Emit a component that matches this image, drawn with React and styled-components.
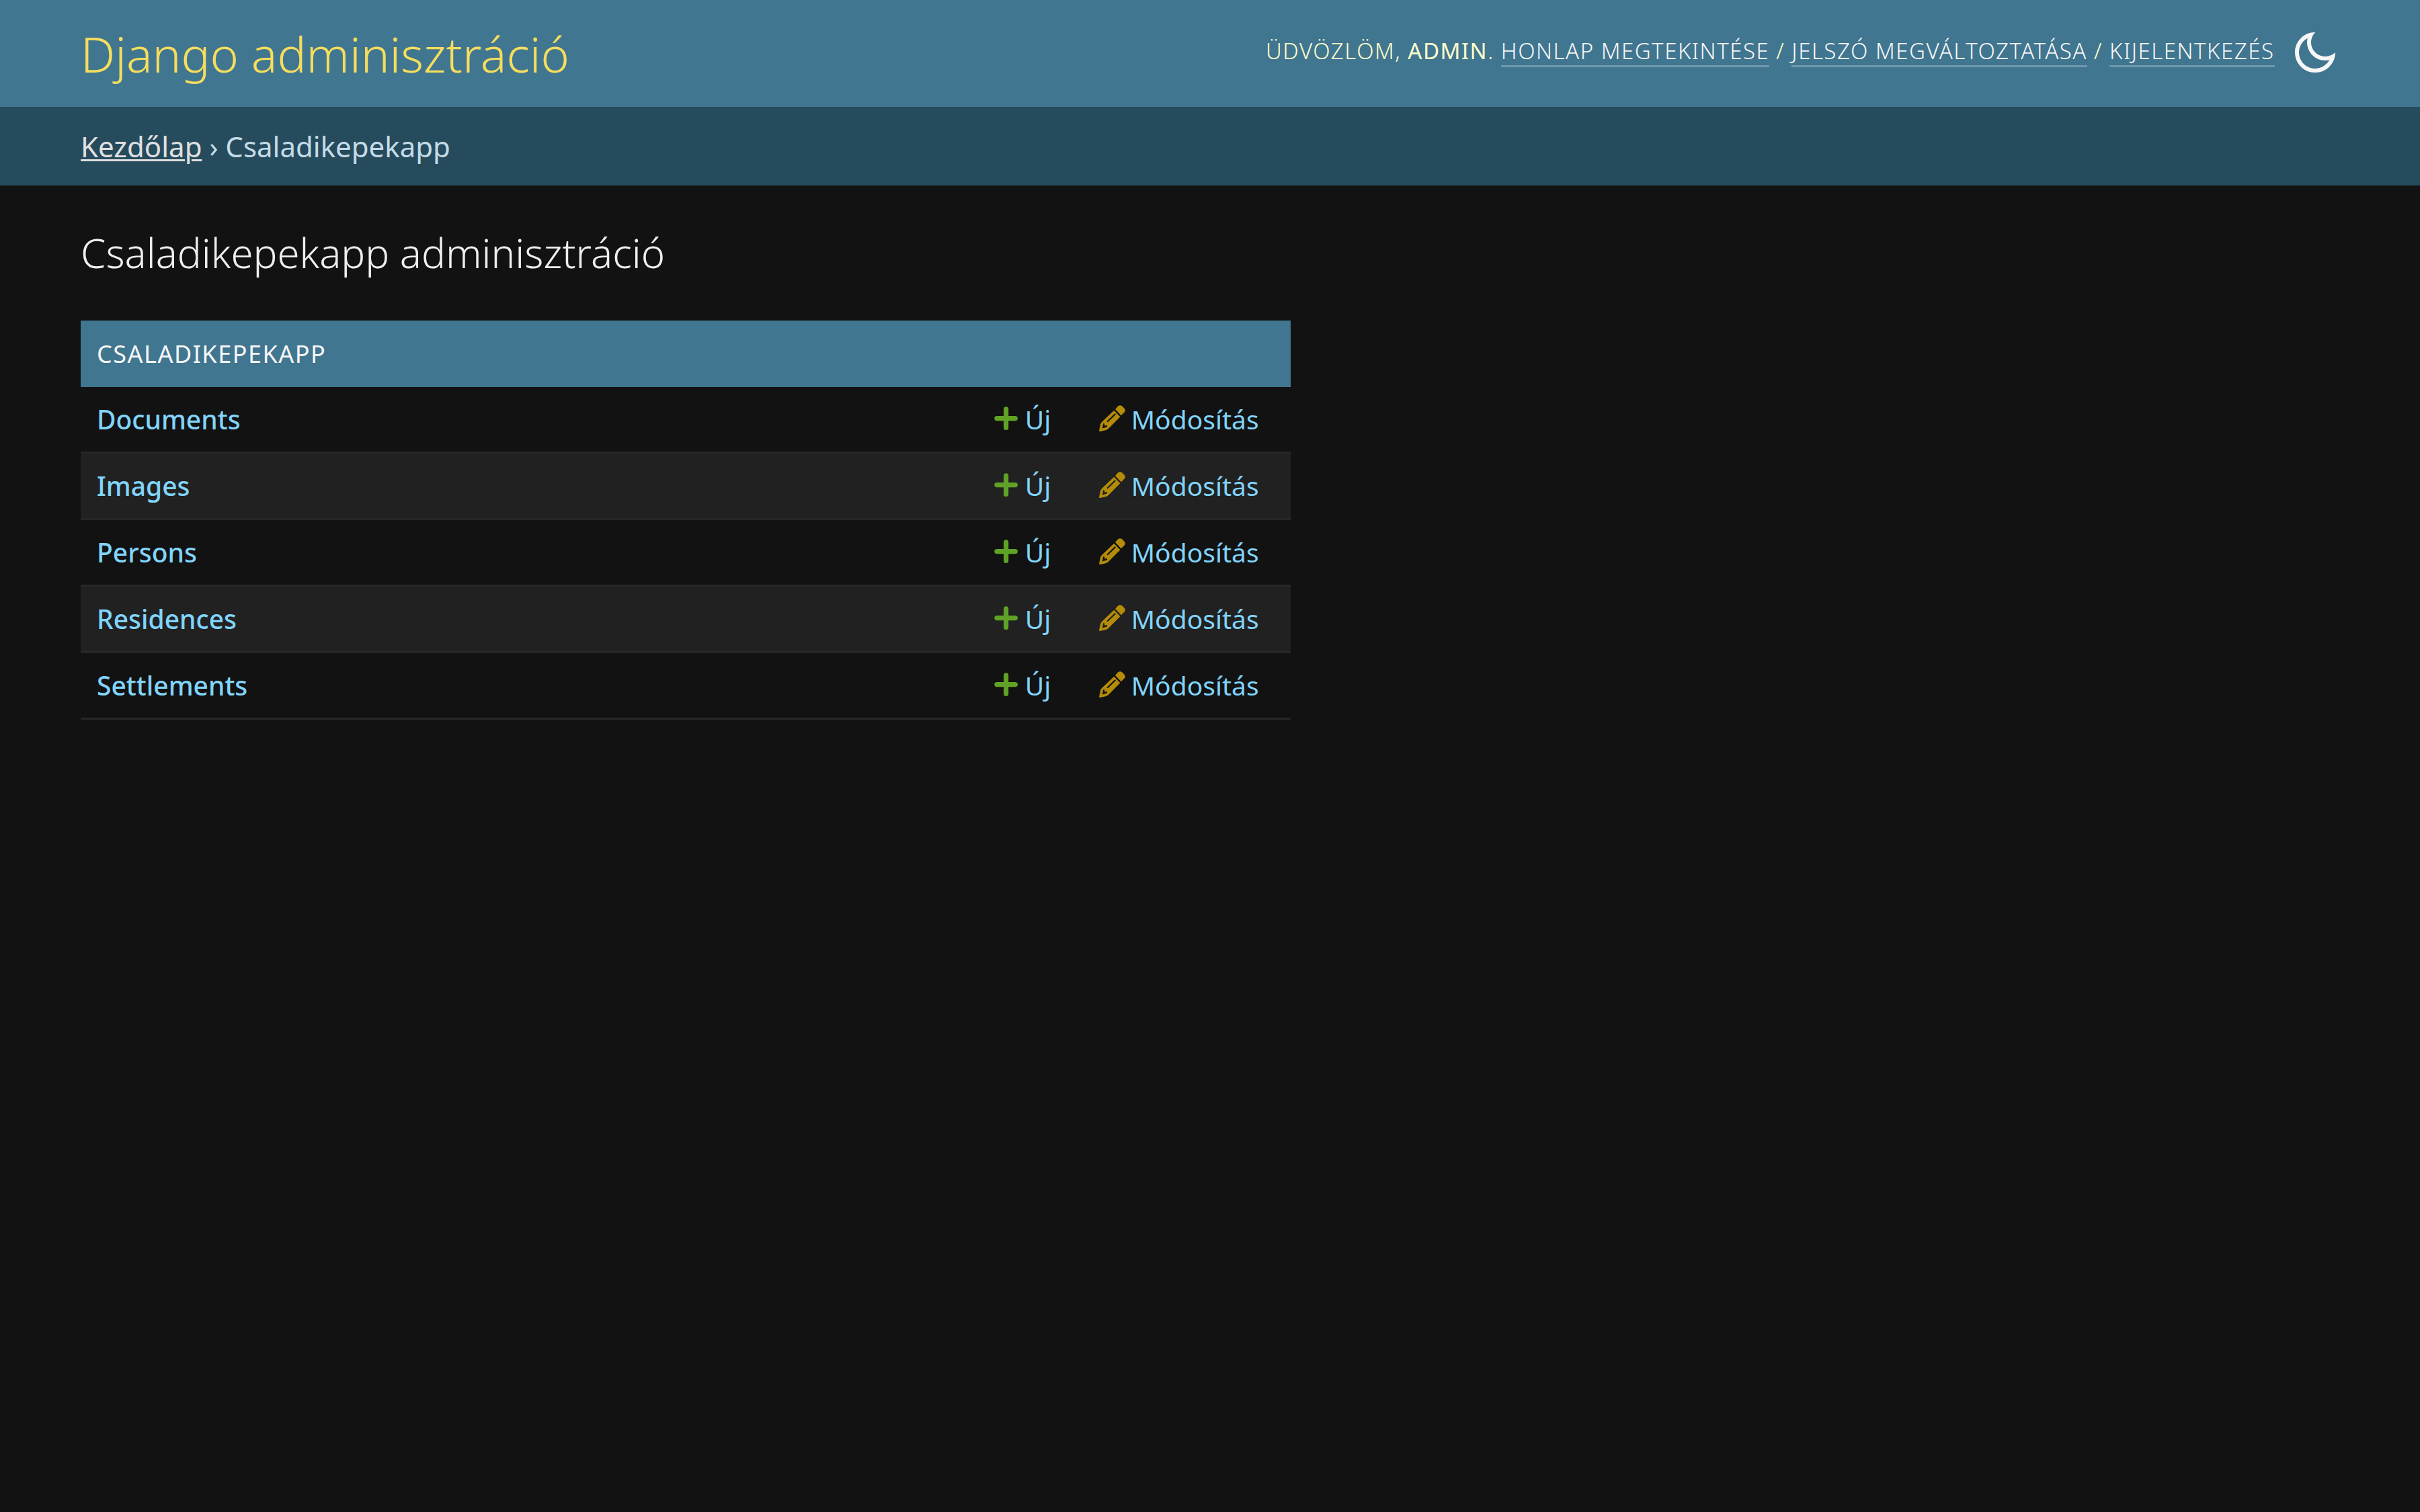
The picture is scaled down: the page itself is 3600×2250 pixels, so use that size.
import React, { Component } from 'react'
import styled, { createGlobalStyle } from 'styled-components'

const MoonIcon = () => (
  <svg viewBox='0 0 24 24' fill='currentColor'>
    <path d='M10 7C10 10.866 13.134 14 17 14C18.9584 14 20.729 13.1957 21.9995 11.8995C22 11.933 22 11.9665 22 12C22 17.5228 17.5228 22 12 22C6.47715 22 2 17.5228 2 12C2 6.47715 6.47715 2 12 2C12.0335 2 12.067 2 12.1005 2.00049C10.8043 3.27098 10 5.04157 10 7ZM4 12C4 16.4183 7.58172 20 12 20C15.0583 20 17.7158 18.2839 19.062 15.7621C18.3945 15.9187 17.7035 16 17 16C12.0294 16 8 11.9706 8 7C8 6.29648 8.08133 5.60547 8.2379 4.938C5.71611 6.28423 4 8.9417 4 12Z' />
  </svg>
)

const PlusIcon = () => (
  <svg viewBox='0 0 39 39' fill='#5fa225'>
    <rect x='2.3' y='16' width='34.6' height='7.2' rx='3.6' />
    <rect x='16' y='2.3' width='7.2' height='34.8' rx='3.6' />
  </svg>
)

const PencilIcon = () => (
  <svg viewBox='0 0 39 39' fill='#b48c08'>
    <path d='M24 6L28 1.6Q31 -1.2 34.4 1.4L37.4 4.4Q40.3 7.6 37.6 10.6L32.8 15.2Z' />
    <path
      fillRule='evenodd'
      d='M22.2 7.8L31.4 17.2L14 34.8Q12.4 36.4 10.6 36.9L1.6 38.9Q-0.1 39.2 0.1 37.4L2 28.6Q2.5 26.7 4 25ZM22.8 12.8L11.8 23.4Q11.2 24.6 12 25.1Q12.8 25.4 13.5 24.7L24.4 14.2Q25 13.1 24.3 12.6Q23.6 12.1 22.8 12.8ZM6.2 27.2L4.8 34.4L11.8 32.4Q12.6 30.8 11.6 29.9L8.8 30.6L8 30L8.2 28.4Q7.6 26.6 6.2 27.2Z'
    />
  </svg>
)

class App extends Component {
  constructor (props) {
    super(props)
    this.state = {
      models: ['Documents', 'Images', 'Persons', 'Residences', 'Settlements']
    }
  }
  render () {
    return (
      <Page>
        <GlobalStyle />
        <Header>
          <Branding>Django adminisztráció</Branding>
          <UserTools>
            Üdvözlöm, <strong>admin</strong>.{' '}
            <a>Honlap megtekintése</a> / <a>Jelszó megváltoztatása</a> / <a>Kijelentkezés</a>
          </UserTools>
          <ThemeToggle><MoonIcon /></ThemeToggle>
        </Header>
        <Breadcrumbs>
          <a>Kezdőlap</a> › Csaladikepekapp
        </Breadcrumbs>
        <Content>
          <h1>Csaladikepekapp adminisztráció</h1>
          <Module>
            <Caption>Csaladikepekapp</Caption>
            {this.state.models.map((model, i) => {
              return (
                <Row key={model} $shaded={i % 2 === 1}>
                  <ModelName>{model}</ModelName>
                  <Action $width={109.9}><PlusIcon />Új</Action>
                  <Action $width={261.3}><PencilIcon />Módosítás</Action>
                </Row>
              )
            })}
          </Module>
        </Content>
      </Page>
    )
  }
}

const GlobalStyle = createGlobalStyle`
  body {
    margin: 0;
    background: #121212;
  }
`

const Page = styled.div`
  min-height: 100vh;
  background: #121212;
  color: #eeeeee;
  font-family: 'Noto Sans', sans-serif;
  font-size: 42px;
`

const Header = styled.header`
  display: flex;
  align-items: flex-start;
  box-sizing: border-box;
  height: 159px;
  padding: 30px 120px;
  background: #417690;
`

const Branding = styled.div`
  flex: 1;
  padding-top: 1px;
  color: #f5dd5d;
  font-size: 72px;
  font-weight: 300;
  line-height: 99px;
`

const UserTools = styled.div`
  padding-top: 23px;
  color: #ffffcc;
  font-size: 33px;
  font-weight: 300;
  line-height: 45px;
  letter-spacing: 1.5px;
  text-transform: uppercase;
  white-space: nowrap;
  strong {
    font-weight: 400;
  }
  a {
    display: inline-block;
    height: 44px;
    color: #f7f7f7;
    border-bottom: 3px solid rgba(255, 255, 255, 0.25);
  }
`

const ThemeToggle = styled.div`
  width: 72px;
  height: 72px;
  margin: 12px 0 0 24.5px;
  color: #f7f7f7;
  svg {
    display: block;
  }
`

const Breadcrumbs = styled.nav`
  padding: 30px 120px;
  background: #264b5d;
  color: #c4dce8;
  line-height: 57px;
  a {
    color: #e0e0e0;
    text-decoration: underline;
    text-decoration-thickness: 3px;
    text-underline-offset: 3px;
  }
`

const Content = styled.main`
  padding: 60px 120px;
  h1 {
    margin: 0 0 60px;
    font-size: 60px;
    font-weight: 300;
    line-height: 81px;
  }
`

const Module = styled.section`
  width: 1800px;
`

const Caption = styled.div`
  padding: 24px;
  background: #417690;
  color: #f7f7f7;
  font-size: 36px;
  line-height: 51px;
  letter-spacing: 1.5px;
  text-transform: uppercase;
`

const Row = styled.div`
  display: flex;
  align-items: center;
  height: 96px;
  padding: 0 24px;
  border-bottom: 3px solid #272727;
  background: ${props => props.$shaded ? '#212121' : '#121212'};
  color: #81d4fa;
  font-size: 39px;
  line-height: 54px;
`

const ModelName = styled.div`
  flex: 1;
  font-weight: 500;
`

const Action = styled.div`
  display: flex;
  width: ${props => props.$width}px;
  margin-left: 48px;
  svg {
    flex: none;
    width: 39px;
    height: 39px;
    margin: 6px 9px 0 0;
  }
`

export default App
